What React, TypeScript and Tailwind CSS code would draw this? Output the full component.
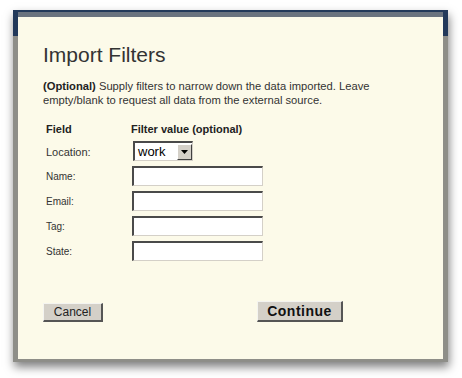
const fields = ["Name:", "Email:", "Tag:", "State:"];

const inputCls =
  "block h-[20px] w-[131px] bg-white border-t-2 border-l-2 border-t-[#4a4a4a] border-l-[#4a4a4a] border-b border-r border-b-[#d4d0c8] border-r-[#d4d0c8] outline-none";

const ImportFilters = () => {
  return (
    <div className="w-[462px] h-[378px] bg-white pt-[10px] pl-[13px] font-['Liberation_Sans',Arial,sans-serif]">
      <div className="w-[435px] h-[352px] flex flex-col pt-[2px] px-[5px] pb-[3px] bg-[linear-gradient(to_bottom,#22395a_0px,#22395a_26px,#8e8e88_26px)] shadow-[1px_5px_9px_rgba(0,0,0,0.5)]">
        <div className="flex-1 flex flex-col bg-[#fcfae9] border-t-[5px] border-[#6a737f] pl-[25px] pt-[26px]">
          <h1 className="text-[21px] leading-[24px] text-[#333]">Import Filters</h1>

          <p className="mt-[13px] w-[345px] text-[11.2px] leading-[13.5px] text-[#333]">
            <span className="font-bold text-[#222]">(Optional)</span> Supply filters to narrow
            down the data imported. Leave empty/blank to request all data from the external
            source.
          </p>

          <div className="mt-[15px] ml-[3px] grid grid-cols-[86px_1fr] text-[#333]">
            <div className="text-[11px] leading-[14px] font-bold text-[#222]">Field</div>
            <div className="text-[11px] leading-[14px] font-bold text-[#222] -ml-[1px]">
              Filter value (optional)
            </div>

            <div className="mt-[5px] h-[25px] pt-[5px] text-[11px] leading-[12px]">Location:</div>
            <div className="mt-[5px] h-[25px]">
              <div className="flex items-center justify-between h-[20px] w-[60px] ml-[1px] bg-white border-t-2 border-l-2 border-t-[#4a4a4a] border-l-[#4a4a4a] border-b border-r border-b-[#d4d0c8] border-r-[#d4d0c8]">
                <span className="pl-[3px] text-[13px] leading-[16px] text-black">work</span>
                <span className="flex items-center justify-center w-[15px] h-[16px] bg-[#d4d0c8] border-t border-l border-t-white border-l-white border-b border-r border-b-[#404040] border-r-[#404040]">
                  <svg width="7" height="4" viewBox="0 0 7 4">
                    <path d="M0 0h7L3.5 4z" fill="#000" />
                  </svg>
                </span>
              </div>
            </div>

            {fields.map((f) => (
              <div key={f} className="contents">
                <div className="h-[25px] pt-[5px] text-[10px] leading-[12px]">{f}</div>
                <div className="h-[25px]">
                  <input type="text" className={inputCls} />
                </div>
              </div>
            ))}
          </div>

          <div className="mt-[35px] flex items-end gap-[154px]">
            <button className="h-[19px] w-[60px] flex items-center justify-center bg-[#d4d0c8] border-t border-l border-t-[#f4f4f0] border-l-[#f4f4f0] border-b-2 border-r-2 border-b-[#555] border-r-[#555] text-[12px] leading-[14px] text-[#222]">
              Cancel
            </button>
            <button className="h-[21px] w-[86px] flex items-center justify-center bg-[#d4d0c8] border-t border-l border-t-[#f4f4f0] border-l-[#f4f4f0] border-b-2 border-r-2 border-b-[#555] border-r-[#555] text-[14px] leading-[16px] font-bold tracking-[0.5px] text-[#111]">
              Continue
            </button>
          </div>
        </div>
      </div>
    </div>
  );
};

export default function App() {
  return <ImportFilters />;
}
